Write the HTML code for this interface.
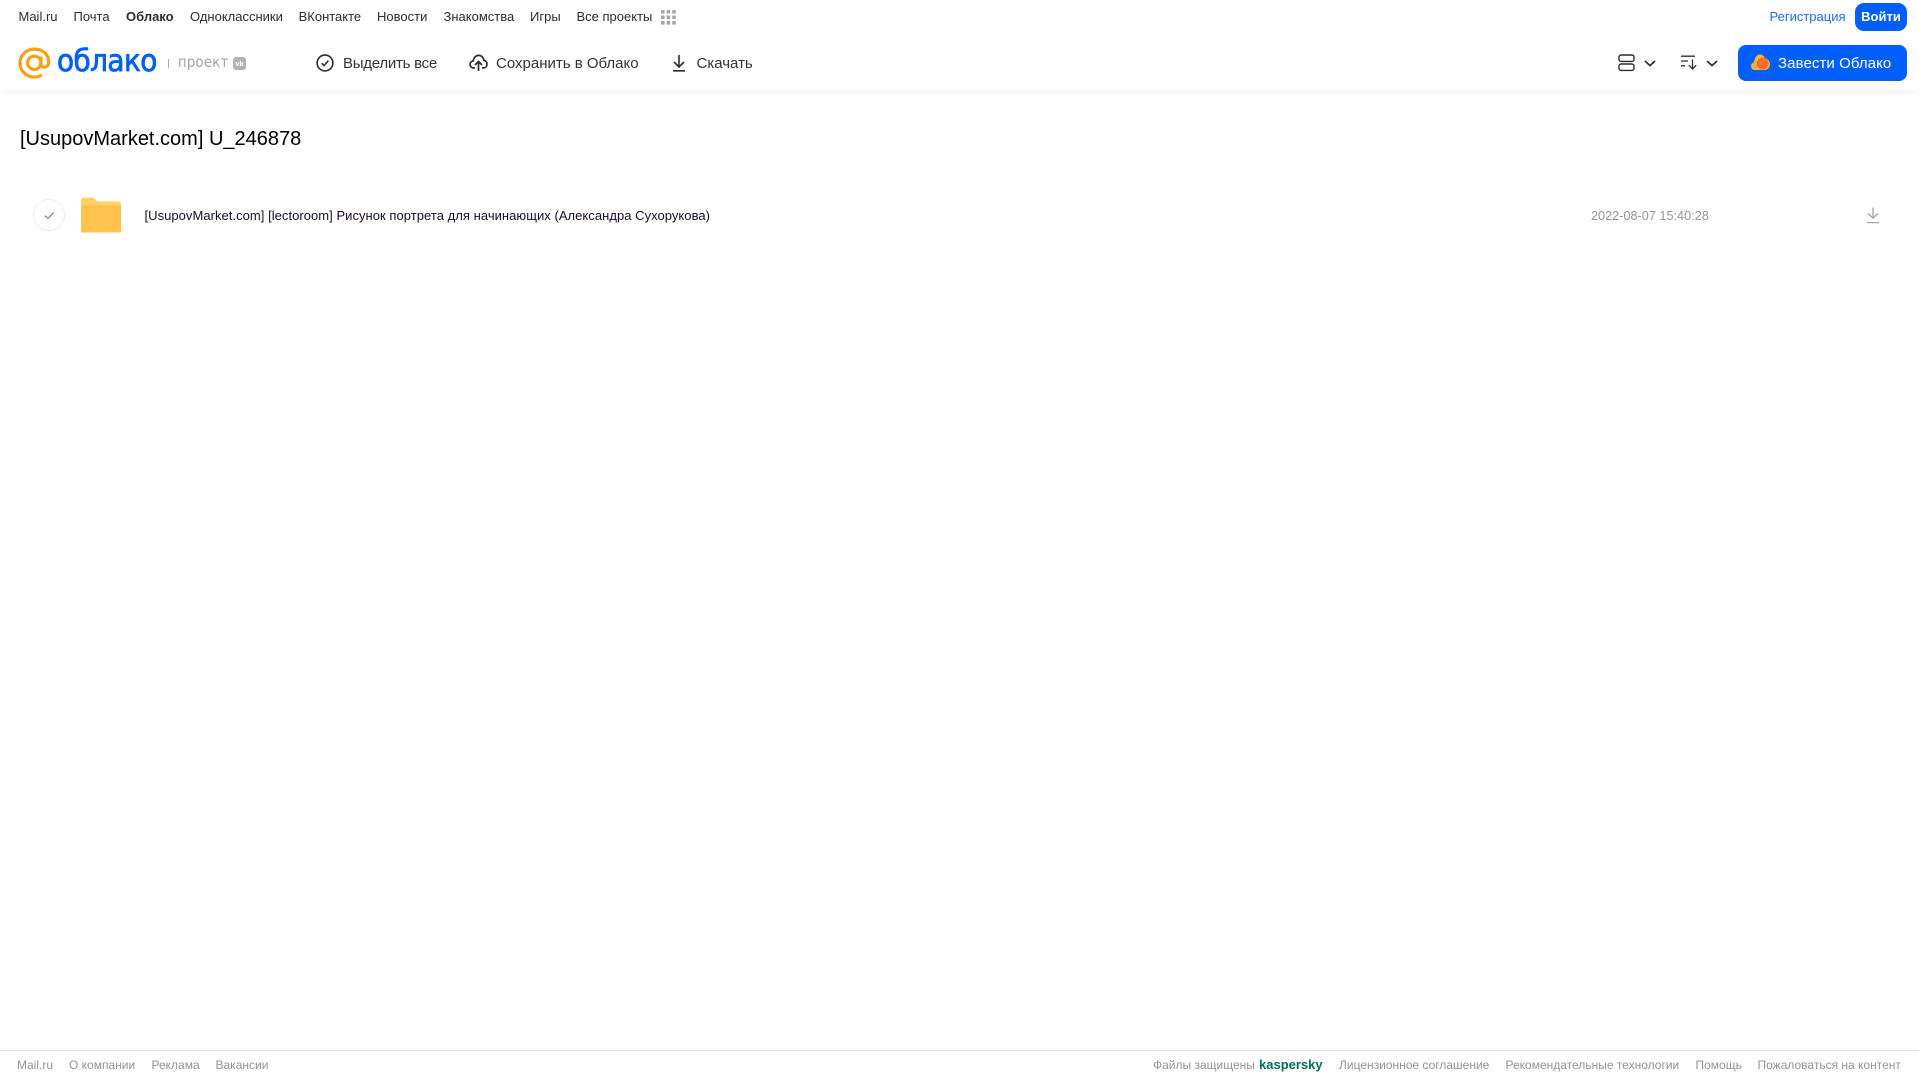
<!DOCTYPE html>
<html lang="ru">
<head>
<meta charset="utf-8">
<title>Облако</title>
<style>
html,body{margin:0;padding:0;background:#fff;}
body{width:1919px;height:1079px;position:relative;overflow:hidden;font-family:"Liberation Sans",Arial,sans-serif;color:#2c2d2e;}
.t{position:absolute;white-space:nowrap;line-height:20px;}
.n{top:7px;font-size:13px;color:#2c2d2e;}
.a{top:53.5px;font-size:15px;color:#333;}
.f{top:1055px;font-size:12px;color:#919399;}
svg{position:absolute;display:block;overflow:visible;}
#hdr{position:absolute;left:0;top:0;width:1919px;height:90px;background:#fff;box-shadow:0 2px 8px rgba(0,0,0,.06);}
</style>
</head>
<body>
<div id="hdr"></div>

<div class="t n" style="left:18.5px">Mail.ru</div>
<div class="t n" style="left:73.5px">Почта</div>
<div class="t n" style="left:126px;font-weight:bold">Облако</div>
<div class="t n" style="left:190px">Одноклассники</div>
<div class="t n" style="left:298.6px">ВКонтакте</div>
<div class="t n" style="left:377px">Новости</div>
<div class="t n" style="left:443.5px">Знакомства</div>
<div class="t n" style="left:530px">Игры</div>
<div class="t n" style="left:576.5px">Все проекты</div>
<svg style="left:661px;top:10px" width="15" height="15" fill="#a5a7ab">
<rect x="0" y="0" width="3.6" height="3.6"/><rect x="5.6" y="0" width="3.6" height="3.6"/><rect x="11.2" y="0" width="3.6" height="3.6"/>
<rect x="0" y="5.5" width="3.6" height="3.6"/><rect x="5.6" y="5.5" width="3.6" height="3.6"/><rect x="11.2" y="5.5" width="3.6" height="3.6"/>
<rect x="0" y="11" width="3.6" height="3.6"/><rect x="5.6" y="11" width="3.6" height="3.6"/><rect x="11.2" y="11" width="3.6" height="3.6"/>
</svg>

<div class="t" style="left:1769.5px;top:7px;font-size:13px;color:#1a6fe8">Регистрация</div>
<div style="position:absolute;left:1855px;top:3px;width:52px;height:28px;border-radius:9px;background:#005ff9;color:#fff;font-size:13px;font-weight:bold;line-height:28px;text-align:center">Войти</div>

<!-- logo -->
<svg style="left:18px;top:47px" width="33.5" height="32.5" viewBox="0 0 35 33" fill="none" stroke="#f9a01b" stroke-width="3.4">
<circle cx="17" cy="16" r="7"/>
<path d="M24 9.5V17.5C24 22 31.8 22 32 15.5C32.3 7 25.6 1.8 17.2 1.8C8.6 1.8 2 8.4 2 16.3C2 24.6 8.6 31 17 31C20 31 22.6 30.2 25 28.8"/>
</svg>
<div class="t" style="left:57px;top:46px;font-size:30px;line-height:32px;color:#005ff9;-webkit-text-stroke:.8px #005ff9;font-family:'DejaVu Sans',sans-serif;letter-spacing:-.6px;transform-origin:0 50%;transform:scaleX(.93)">облако</div>
<div style="position:absolute;left:168px;top:59px;width:1px;height:9px;background:#a5a7ab"></div>
<div class="t" style="left:177.5px;top:52px;font-size:15px;color:#a0a2a6;letter-spacing:.3px;font-family:'DejaVu Sans',sans-serif;transform-origin:0 50%;transform:scaleX(.88)">проект</div>
<div style="position:absolute;left:233px;top:57px;width:13px;height:13px;border-radius:3px;background:#b0b2b6;color:#fff;font-size:7.5px;line-height:13px;text-align:center;font-weight:bold">vk</div>

<!-- actions -->
<svg style="left:316px;top:54px" width="18" height="18" viewBox="0 0 18 18" fill="none" stroke="#2c2d2e" stroke-width="1.6">
<circle cx="9" cy="9" r="7.9"/><path d="M5.6 9.2L8 11.5L12.4 6.7"/>
</svg>
<div class="t a" style="left:343px;letter-spacing:-.25px">Выделить все</div>
<svg style="left:469px;top:54px" width="19" height="18" viewBox="0 0 19 18" fill="none" stroke="#2c2d2e" stroke-width="1.7">
<path d="M6 14H5C2.6 14 1 12.4 1 10.4C1 8.5 2.4 7.2 4.2 7C4.6 3.6 6.8 1.4 9.6 1.4C12.4 1.4 14.5 3.4 14.9 6.4C16.8 6.7 18 8.3 18 10.2C18 12.4 16.4 14 14 14H13"/>
<path d="M9.5 17V8M6 11L9.5 7.5L13 11"/>
</svg>
<div class="t a" style="left:496px;letter-spacing:0">Сохранить в Облако</div>
<svg style="left:671px;top:54px" width="16" height="18" viewBox="0 0 16 18" fill="none" stroke="#2c2d2e" stroke-width="1.6">
<path d="M8 1V12.5M3 8L8 13L13 8M2 16.8H14"/>
</svg>
<div class="t a" style="left:696.5px">Скачать</div>

<!-- view / sort -->
<svg style="left:1618px;top:54px" width="17" height="18" viewBox="0 0 17 18" fill="none" stroke="#2c2d2e" stroke-width="1.4">
<rect x="1" y="1" width="15" height="6.4" rx="2"/><rect x="1" y="10" width="15" height="6.4" rx="2"/>
</svg>
<svg style="left:1644px;top:60px" width="12" height="7" viewBox="0 0 12 7" fill="none" stroke="#2c2d2e" stroke-width="1.7">
<path d="M1 1L6 5.6L11 1"/>
</svg>
<svg style="left:1681px;top:55px" width="17" height="15" viewBox="0 0 17 15" fill="none" stroke="#2c2d2e" stroke-width="1.3">
<path d="M0 1.2H14M0 6H7M0 10.8H4M11.5 4.5V14M7.8 10.2L11.5 14L15.2 10.2"/>
</svg>
<svg style="left:1706px;top:60px" width="12" height="7" viewBox="0 0 12 7" fill="none" stroke="#2c2d2e" stroke-width="1.7">
<path d="M1 1L6 5.6L11 1"/>
</svg>

<div style="position:absolute;left:1738px;top:45px;width:169px;height:36px;border-radius:8px;background:#005ff9"></div>
<svg style="left:1751px;top:54px" width="19" height="17" viewBox="0 0 19 17">
<path d="M4 16C1.5 16 0 14.2 0 12C0 10 1.3 8.6 3 8.2C3.6 3.4 6 0.5 9 0.5C11.4 0.5 13 2 13.8 4.4C16.6 4.6 19 7 19 10.4C19 13.6 16.6 16 13.4 16Z" fill="#fbb03b"/>
<circle cx="11.6" cy="9.6" r="5.8" fill="#f4702a"/>
</svg>
<div class="t" style="left:1778px;top:53.5px;font-size:15px;color:#fff;letter-spacing:.08px">Завести Облако</div>

<!-- title -->
<div class="t" style="left:20px;top:125.5px;font-size:20px;line-height:26px;color:#000">[UsupovMarket.com] U_246878</div>

<!-- row -->
<div style="position:absolute;left:33px;top:199px;width:30px;height:30px;border:1px solid #eceded;border-radius:50%;background:#fff"></div>
<svg style="left:43.5px;top:211px" width="11" height="9" viewBox="0 0 11 9" fill="none" stroke="#919399" stroke-width="1.4">
<path d="M1 4.6L4 7.4L10 1.2"/>
</svg>
<svg style="left:81px;top:197px" width="40" height="36" viewBox="0 0 41 36">
<path d="M0 3C0 1.3 1.3 0 3 0H11C13 0 14 .8 15 2.2C15.8 3.4 16.6 4 18 4H38C39.7 4 41 5.3 41 7V33C41 34.7 39.7 36 38 36H3C1.3 36 0 34.7 0 33Z" fill="#ffd166"/>
<rect x="0" y="8" width="41" height="28" rx="2" fill="#ffc34d"/>
</svg>
<div class="t" style="left:144.5px;top:206px;font-size:13px;letter-spacing:.04px;color:#1a0a2a">[UsupovMarket.com] [lectoroom] Рисунок портрета для начинающих (Александра Сухорукова)</div>
<div class="t" style="left:1591px;top:206px;font-size:12.7px;color:#919399">2022-08-07 15:40:28</div>
<svg style="left:1866px;top:207px" width="14" height="17" viewBox="0 0 14 17" fill="none" stroke="#a5a7ab" stroke-width="1.4">
<path d="M7 0.5V11M2 6.2L7 11.2L12 6.2M1 15.6H13"/>
</svg>

<!-- footer -->
<div style="position:absolute;left:0;top:1050px;width:1919px;height:1px;background:#dcdcdc"></div>
<div class="t f" style="left:17px">Mail.ru</div>
<div class="t f" style="left:69px">О компании</div>
<div class="t f" style="left:151.5px">Реклама</div>
<div class="t f" style="left:215.5px">Вакансии</div>
<div class="t f" style="left:1153px">Файлы защищены</div>
<div class="t f" style="left:1259px;font-weight:bold;color:#006d5c;font-size:13px">kaspersky</div>
<div class="t f" style="left:1339px">Лицензионное соглашение</div>
<div class="t f" style="left:1505.5px">Рекомендательные технологии</div>
<div class="t f" style="left:1695.5px">Помощь</div>
<div class="t f" style="left:1757.5px">Пожаловаться на контент</div>
</body>
</html>
